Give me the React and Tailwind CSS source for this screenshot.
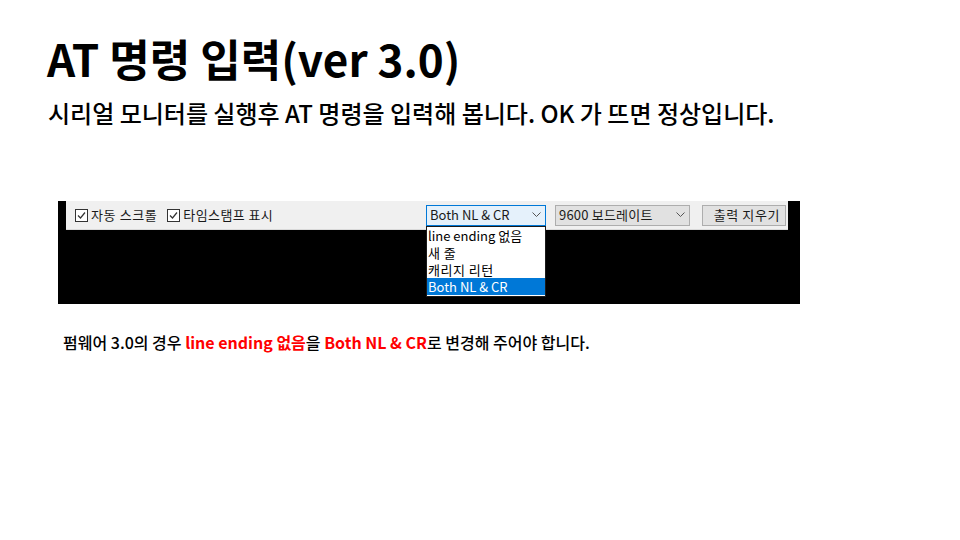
export default function App() {
  const ui = { fontFamily: '"Noto Sans CJK KR", "Noto Sans", sans-serif' };
  return (
    <div className="w-[960px] h-[540px] bg-white overflow-hidden relative" style={ui}>
      <div className="flex flex-col">
        <h1 className="ml-[47px] mt-[30px] text-[44px] leading-[56px] font-bold text-black">
          AT 명령 입력(ver 3.0)
        </h1>
        <p className="ml-[48px] mt-[12px] text-[24px] leading-[30px] font-medium text-black">
          시리얼 모니터를 실행후 AT 명령을 입력해 봅니다. OK 가 뜨면 정상입니다.
        </p>

        {/* screenshot */}
        <div className="ml-[58px] mt-[73px] w-[742px] h-[103px] bg-black relative">
          <div className="ml-[8px] w-[722px] h-[29px] bg-[#f0f0f0] border-b border-[#d9d9d9] flex items-center text-[13px] text-[#1a1a1a] pr-[2px]">
            <div className="ml-[9px] flex items-center gap-[3px]">
              <CheckBox />
              <span className="tracking-[0.6px]">자동 스크롤</span>
            </div>
            <div className="ml-[10px] flex items-center gap-[3px]">
              <CheckBox />
              <span className="tracking-[0.4px]">타임스탬프 표시</span>
            </div>
            <div className="ml-auto w-[120px] h-[21px] border border-[#0078d7] bg-[#e5f1fb] flex items-center justify-between pl-[3px] pr-[4px]">
              <span>Both NL &amp; CR</span>
              <Chevron />
            </div>
            <div className="ml-[9px] w-[135px] h-[21px] border border-[#adadad] bg-[#e1e1e1] flex items-center justify-between pl-[3px] pr-[4px]">
              <span className="tracking-[0.2px]">9600 보드레이트</span>
              <Chevron />
            </div>
            <div className="ml-[12px] w-[84px] h-[21px] border border-[#adadad] bg-[#e1e1e1] flex items-center justify-end pr-[5px]">
              <span className="tracking-[0.6px]">출력 지우기</span>
            </div>
          </div>
          <div className="absolute left-[368px] top-[25px] w-[120px] h-[71px] bg-white border border-[#1a1a1a] flex flex-col text-[13px] text-black">
            <div className="pl-[1px] h-[17px] leading-[17px] overflow-hidden">line ending 없음</div>
            <div className="pl-[1px] h-[17px] leading-[17px] overflow-hidden tracking-[0.5px]">새 줄</div>
            <div className="pl-[1px] h-[17px] leading-[17px] overflow-hidden tracking-[0.5px]">캐리지 리턴</div>
            <div className="pl-[1px] h-[17px] leading-[17px] overflow-hidden bg-[#0078d7] text-white">Both NL &amp; CR</div>
          </div>
        </div>

        <p className="ml-[63px] mt-[27px] text-[16px] leading-[22px] font-medium text-black">
          펌웨어 3.0의 경우 <span className="text-[#ff0000] font-bold">line ending 없음</span>을{" "}
          <span className="text-[#ff0000] font-bold">Both NL &amp; CR</span>로 변경해 주어야 합니다.
        </p>
      </div>
    </div>
  );
}

function CheckBox() {
  return (
    <svg width="13" height="13" viewBox="0 0 13 13">
      <rect x="0.5" y="0.5" width="12" height="12" fill="white" stroke="#333" />
      <path d="M3 6.5 L5.5 9 L10 3.5" fill="none" stroke="#333" strokeWidth="1.2" />
    </svg>
  );
}

function Chevron() {
  return (
    <svg width="9" height="6" viewBox="0 0 9 6">
      <path d="M0.5 0.5 L4.5 4.5 L8.5 0.5" fill="none" stroke="#555" strokeWidth="1" />
    </svg>
  );
}
